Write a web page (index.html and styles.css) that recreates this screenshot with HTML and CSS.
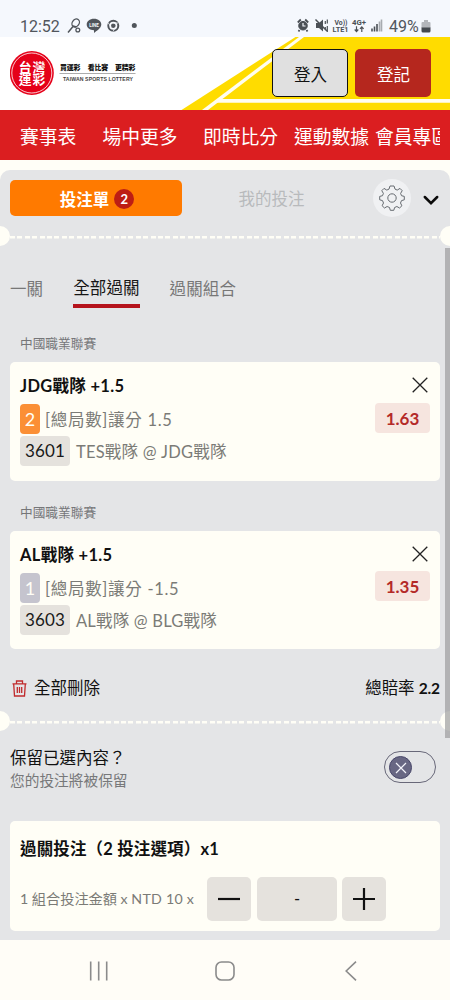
FILE: index.html
```html
<!DOCTYPE html>
<html lang="zh-Hant">
<head>
<meta charset="utf-8">
<title>台灣運彩</title>
<link rel="stylesheet" href="styles.css">
</head>
<body>
<div class="status">
  <span class="clock">12:52</span>
  <svg class="notif" width="72" height="16" viewBox="0 0 72 16" fill="none" stroke="#50555b">
    <ellipse cx="8.7" cy="5" rx="3.4" ry="4.3" transform="rotate(35 8.7 5)" stroke-width="1.3"/>
    <path d="M6 8.5 1 14.5M6 8l3.500 1" stroke-width="1.5"/><circle cx="10.800" cy="12" r="1.900" stroke-width="1.300"/>
    <path d="M27 .8c4.200 0 7.300 2.500 7.300 5.700 0 3.800-5 6.500-7.300 8.500v-2.800c-4.200 0-7.300-2.500-7.300-5.700S22.800.8 27 .8z" fill="#50555b" stroke="none"/>
    <text x="22.300" y="8.500" textLength="9.500" class="line-mark">LINE</text>
    <circle cx="46.300" cy="7.700" r="5" stroke-width="2"/><circle cx="46.300" cy="7.700" r="2.300" fill="#50555b" stroke="none"/><path d="M46.300 5h5M44 9l-3-4.500M48.500 9l-2.500 4.500" stroke="#f5f8fd" stroke-width=".8"/>
    <circle cx="67.300" cy="7.500" r="2.500" fill="#50555b" stroke="none"/>
  </svg>
  <svg class="signals" width="86" height="16" viewBox="0 0 86 16" fill="none" stroke="#4b5056">
    <circle cx="6" cy="7.700" r="4.300" fill="#4b5056" stroke-width="1"/><path d="M6 5v3h2.500" stroke="#f5f8fd" stroke-width="1.200"/><path d="M.8 4.500l3-3M11.200 4.500l-3-3M2.500 12l-1 1.500M9.500 12l1 1.500" stroke-width="1.800"/>
    <path d="M19 5h3l4-3.500v12L22 10h-3z" fill="#4b5056" stroke="none"/><path d="M18.500 1.500 30 13" stroke-width="1.500"/><path d="M28.300 3v3M30.300 1.500v4M28.300 9v2M30.300 8v6" stroke-width="1.200"/>
    <text x="37.500" y="6.700" textLength="13" lengthAdjust="spacingAndGlyphs" class="tiny">Vo))</text>
    <text x="35.500" y="14" textLength="16" lengthAdjust="spacingAndGlyphs" class="tiny">LTE1</text>
    <text x="55" y="6.700" textLength="14" lengthAdjust="spacingAndGlyphs" class="tiny">4G+</text>
    <path d="M59.500 8.300v5M57.700 11.500l1.800 2 1.800-2M64.800 14V9M63 10.800l1.800-2 1.800 2" stroke-width="1.200"/>
    <path d="M75 13.500v-3M77.500 13.500v-5M80 13.500V6" stroke-width="1.600"/><path d="M82.500 13.500v-10M84.500 13.500v-12" stroke="#a7abb0" stroke-width="1.600"/>
  </svg>
  <span class="percent">49%</span>
  <svg class="battery" width="10" height="15" viewBox="0 0 10 15"><path d="M3 1h4v2h1.500Q9.500 3 9.500 4v5h-9V4q0-1 1-1H3z" fill="#b3b6bb"/><path d="M.5 8.500h9V12q0 1.500-1.500 1.500H2Q.5 13.500.5 12z" fill="#44494f"/></svg>
</div>

<header class="header">
  <svg class="header-stripes" width="450" height="73" viewBox="0 0 450 73">
    <path d="M295.500 0H450v73H181.500z" fill="#ffdc00"/>
    <path d="M299 0h5L208 73h-6z" fill="#fffdf0"/><path d="M218 62h232v3.700H213z" fill="#fffdf0"/>
  </svg>
  <svg class="logo" width="130" height="46" viewBox="0 0 130 46">
    <circle cx="21.800" cy="23" r="22" fill="#e50019"/><circle cx="21.800" cy="23" r="20" fill="none" stroke="#fff" stroke-width=".8"/>
    <g class="logo-mark"><text x="8.700" y="21.700" textLength="26.500">台灣</text><text x="8.700" y="34.300" textLength="26.500">運彩</text></g>
    <g class="slogan"><text x="50" y="20.200" textLength="20.500">買運彩</text><text x="77.700" y="20.200" textLength="20.500">看比賽</text><text x="105" y="20.200" textLength="20.500">更精彩</text></g>
    <path d="M49.500 23.500h76" stroke="#888" stroke-width=".7"/>
    <text x="53" y="31" textLength="70" class="logo-en">TAIWAN SPORTS LOTTERY</text>
  </svg>
  <div class="header-actions"><button class="btn login">登入</button><button class="btn register">登記</button></div>
</header>

<nav class="nav">
  <div class="nav-list"><a>賽事表</a><a>場中更多</a><a>即時比分</a><a>運動數據</a><a>會員專區</a></div>
</nav>

<main class="slip">
  <div class="slip-tabs">
    <div class="slip-tab active">投注單<span class="count">2</span></div>
    <div class="slip-tab">我的投注</div>
    <div class="gear">
      <svg width="26" height="26" viewBox="-13 -13 26 26" fill="none" stroke="#666b70" stroke-width="1">
        <path d="M-2-12H2L3-8.900 5.200-7.900 8-9.600 10.200-7.300 8.600-4.600 9.500-2.300 12.300-1.600V1.800L9.500 2.600 8.500 5 9.900 7.800 7.500 10 4.900 8.500 2.600 9.500 1.800 12.300H-1.700L-2.500 9.500-4.900 8.500-7.500 10-9.900 7.700-8.500 5-9.500 2.600-12.300 1.800V-1.600L-9.500-2.300-8.600-4.600-10.200-7.300-8-9.600-5.200-7.900-3-8.900z" stroke-linejoin="round"/><circle cx="0" cy="0" r="4.200"/>
      </svg>
    </div>
    <svg class="chevron" width="16" height="11" viewBox="0 0 16 11"><path d="M1.800 2 8 8.200 14.200 2" fill="none" stroke="#0a0a0a" stroke-width="2.500" stroke-linecap="round"/></svg>
  </div>
  <div class="perforation"></div>

  <div class="scroll">
    <div class="modes"><span class="mode">一關</span><span class="mode selected">全部過關</span><span class="mode">過關組合</span></div>

    <section class="bet">
      <div class="league">中國職業聯賽</div>
      <div class="card">
        <div class="bet-info">
          <div class="bet-title">JDG戰隊 +1.5</div>
          <div class="bet-line"><span class="pick orange">2</span><span class="market">[總局數]讓分 1.5</span></div>
          <div class="bet-line teams"><span class="code">3601</span><span>TES戰隊 @ JDG戰隊</span></div>
        </div>
        <div class="bet-side">
          <svg width="16" height="16" viewBox="0 0 16 16"><path d="M.7.700 15.300 15.300M15.300.700.700 15.300" stroke="#222" stroke-width="1.300"/></svg>
          <span class="odds">1.63</span>
        </div>
      </div>
    </section>

    <section class="bet second">
      <div class="league">中國職業聯賽</div>
      <div class="card">
        <div class="bet-info">
          <div class="bet-title">AL戰隊 +1.5</div>
          <div class="bet-line"><span class="pick gray">1</span><span class="market">[總局數]讓分 -1.5</span></div>
          <div class="bet-line teams"><span class="code">3603</span><span>AL戰隊 @ BLG戰隊</span></div>
        </div>
        <div class="bet-side">
          <svg width="16" height="16" viewBox="0 0 16 16"><path d="M.7.700 15.300 15.300M15.300.700.700 15.300" stroke="#222" stroke-width="1.300"/></svg>
          <span class="odds">1.35</span>
        </div>
      </div>
    </section>

    <div class="totals">
      <svg width="15" height="17" viewBox="0 0 15 17" fill="none" stroke="#c02a2c" stroke-width="1.300"><path d="M.5 3.800h14M4.500 3.500V1h6v2.500M1.700 4l.8 12h10l.8-12M5.300 7v6M7.500 7v6M9.700 7v6"/></svg>
      <span class="clear">全部刪除</span>
      <span class="total">總賠率 <b>2.2</b></span>
    </div>
    <div class="perforation"></div>

    <div class="keep">
      <div><div class="keep-title">保留已選內容？</div><div class="keep-note">您的投注將被保留</div></div>
      <div class="toggle"><div class="knob"><svg width="12" height="12" viewBox="0 0 12 12"><path d="M1 1l10 10M11 1 1 11" stroke="#f3f3fa" stroke-width="1.200"/></svg></div></div>
    </div>

    <section class="stake">
      <div class="stake-title">過關投注（2 投注選項）x1</div>
      <div class="stake-row">
        <span class="stake-label">1 組合投注金額 x <span class="amount">NTD 10 x</span></span>
        <span class="step minus"><svg width="22" height="22" viewBox="0 0 22 22"><path d="M0 11h22" stroke="#111" stroke-width="2.200"/></svg></span>
        <span class="value">-</span>
        <span class="step"><svg width="22" height="22" viewBox="0 0 22 22"><path d="M0 11h22M11 0v22" stroke="#111" stroke-width="2.200"/></svg></span>
      </div>
    </section>
  </div>
  <div class="scrollbar"></div>
</main>

<footer class="system-nav">
  <svg width="20" height="20" viewBox="0 0 20 20"><path d="M1.700.5v19M9.700.5v19M17.700.5v19" stroke="#8b8b8b" stroke-width="1.600"/></svg>
  <svg width="20" height="20" viewBox="0 0 20 20"><rect x="1" y="1" width="18" height="18" rx="5.500" fill="none" stroke="#8b8b8b" stroke-width="1.600"/></svg>
  <svg width="12" height="20" viewBox="0 0 12 20"><path d="M11 .7 1.200 10 11 19.300" fill="none" stroke="#8b8b8b" stroke-width="1.600"/></svg>
</footer>
</body>
</html>
```
FILE: styles.css
```css
* { box-sizing: border-box; }
svg { display: block; flex: none; }
body {
  margin: 0; width: 450px; height: 1000px; overflow: hidden;
  display: flex; flex-direction: column;
  background: #fffef7; color: #111;
  font-family: Lato, "Noto Sans CJK TC", sans-serif; font-size: 16.5px;
}
.status {
  height: 37px; flex: none; display: flex; align-items: flex-start;
  padding: 18px 18px 0 20px; background: #f5f8fd;
  font-family: Roboto, sans-serif; color: #51565c;
}
.clock { width: 47px; font-size: 16px; line-height: 17px; }
.line-mark { font: bold 4.5px Roboto, sans-serif; fill: #f5f8fd; stroke: none; }
.signals { margin-left: 158px; }
.tiny { font: bold 7.3px Roboto, sans-serif; fill: #4b5056; stroke: none; }
.percent { margin-left: 6px; width: 32px; font-size: 16px; line-height: 17px; }
.battery { margin-top: 1px; }

.header { position: relative; height: 73px; flex: none; display: flex; justify-content: space-between; padding: 13px 19px 0 10px; background: #fff; }
.header-stripes { position: absolute; left: 0; top: 0; }
.logo { position: relative; }
.logo-mark { font: bold 12.800px/1 "Noto Sans CJK TC", sans-serif; fill: #fff; }
.slogan { font: 900 6.900px "Noto Sans CJK TC", sans-serif; fill: #111; }
.logo-en { font: bold 5.200px "Liberation Sans", sans-serif; fill: #444; }
.header-actions { position: relative; display: flex; gap: 7px; margin-top: -1px; }
.btn { width: 76px; height: 48px; border-radius: 5px; padding: 3px 0 0 1px; font: 16.5px/42px Lato, "Noto Sans CJK TC", sans-serif; }
.login { background: #e0e0e0; border: 1.500px solid #111; color: #111; }
.register { background: #b5271e; border: 0; color: #fff; }

.nav { height: 50px; flex: none; padding: 0 10px 0 20px; background: #db1e20; }
.nav-list { display: flex; overflow: hidden; height: 50px; color: #fff; font-size: 18.800px; line-height: 54px; white-space: nowrap; }
.nav-list a { flex: none; }
.nav-list a:nth-child(1) { width: 82.500px; }
.nav-list a:nth-child(2) { width: 100.500px; }
.nav-list a:nth-child(3) { width: 91px; }
.nav-list a:nth-child(4) { width: 81px; }

.slip { position: relative; margin-top: 10px; height: 770px; flex: none; overflow: hidden; background: #e4e5e7; border-radius: 10px 10px 0 0; }
.slip-tabs { display: flex; align-items: center; height: 56px; padding: 0 10px; }
.slip-tab { width: 172px; height: 36px; display: flex; align-items: center; justify-content: center; gap: 5px; color: #b8babc; padding-top: 0; }
.slip-tab.active { background: #ff7a00; color: #fff; font-weight: 700; border-radius: 5px; padding: 1px 0 0 2px; }
.slip-tab + .slip-tab { width: 191px; padding-right: 12px; }
.count { width: 20px; height: 20px; border-radius: 50%; background: #bd1d14; font-size: 13px; line-height: 20px; text-align: center; }
.gear { width: 38px; height: 38px; border-radius: 50%; background: #f0f1f3; display: flex; align-items: center; justify-content: center; }
.chevron { margin: 4px 0 0 12px; }

.perforation { position: relative; height: 20px; background: repeating-linear-gradient(90deg, #fffef6 0 5px, #e4e5e7 5px 7.400px) 10px 10px / 430px 2.500px no-repeat; }
.perforation::before, .perforation::after { content: ""; position: absolute; top: 0; width: 20px; height: 20px; border-radius: 50%; background: #fffef6; }
.perforation::before { left: -10px; }
.perforation::after { right: -10px; }

.modes { display: flex; gap: 30px; padding: 30px 10px 0; color: #777; line-height: 24px; letter-spacing: .1px; }
.mode { padding-top: 1px; height: 32px; }
.mode.selected { padding-top: 0; color: #161616; border-bottom: 4px solid #b5131c; }
.bet { padding: 22px 10px 0; }
.bet.second { padding-top: 18px; }
.league { height: 32px; line-height: 26px; padding-left: 10px; font-size: 12.700px; color: #757679; }
.card { display: flex; justify-content: space-between; height: 118.500px; padding: 0 10px; border-radius: 5px; background: #fffef6; }
.bet-title { height: 42px; padding-top: 12px; line-height: 24px; font-weight: 700; letter-spacing: .3px; }
.bet-line { display: flex; height: 32px; line-height: 33px; gap: 5px; color: #7b7b76; white-space: nowrap; letter-spacing: .2px; }
.market { letter-spacing: .7px; }
.pick { width: 20px; height: 30px; border-radius: 4px; color: #fffef6; font-size: 18px; line-height: 30px; text-align: center; }
.pick.orange { background: #fb8f35; }
.pick.gray { background: #c5c4ce; }
.teams { line-height: 32px; gap: 6px; }
.code { width: 50px; height: 30px; border-radius: 4px; background: #e5e2dd; color: #191919; font-size: 17px; line-height: 30px; text-align: center; }
.bet-side { display: flex; flex-direction: column; align-items: flex-end; padding-top: 15px; gap: 9.500px; }
.bet-side svg { margin-right: 2.500px; }
.odds { width: 55px; height: 30px; border-radius: 4px; background: #f6e5df; color: #b42a28; font-size: 17px; line-height: 31px; font-weight: 700; text-align: center; }

.totals { display: flex; align-items: center; height: 62px; padding: 16px 10px 0 12px; line-height: 24px; }
.clear { margin-left: 7px; flex: 1; }
.total { letter-spacing: -.1px; }
.total b { font-size: 15.500px; }
.keep { display: flex; justify-content: space-between; height: 89.500px; padding: 15px 14px 0 10px; }
.keep-title { line-height: 24px; }
.keep-note { font-size: 14.700px; line-height: 21px; color: #77787a; }
.toggle { margin-top: 5px; width: 52px; height: 32px; border: 1px solid #686879; border-radius: 16px; padding: 4px; }
.knob { width: 23px; height: 23px; border-radius: 50%; background: #686783; border: 1px solid #48476a; display: flex; align-items: center; justify-content: center; }
.stake { margin: 0 10px; height: 110px; padding: 16px 10px 0; border-radius: 5px; background: #fffef6; }
.stake-title { line-height: 24px; font-weight: 700; white-space: nowrap; letter-spacing: .15px; }
.stake-row { display: flex; margin-top: 16px; line-height: 44px; }
.stake-label { width: 187px; font-size: 14.200px; color: #7b7b76; white-space: nowrap; }
.amount { letter-spacing: .25px; }
.step, .value { width: 44px; height: 44px; border-radius: 5px; background: #e5e2dd; display: flex; align-items: center; justify-content: center; }
.value { width: 80px; margin: 0 5px 0 6px; }
.scrollbar { position: absolute; right: 0; top: 78px; width: 5px; height: 490px; background: rgba(150, 150, 152, .65); }

.system-nav { flex: 1; display: flex; align-items: center; padding: 2px 0 0 89px; background: #fffdf7; }
.system-nav svg:nth-child(2) { margin-left: 106px; }
.system-nav svg:nth-child(3) { margin-left: 110px; }
```
